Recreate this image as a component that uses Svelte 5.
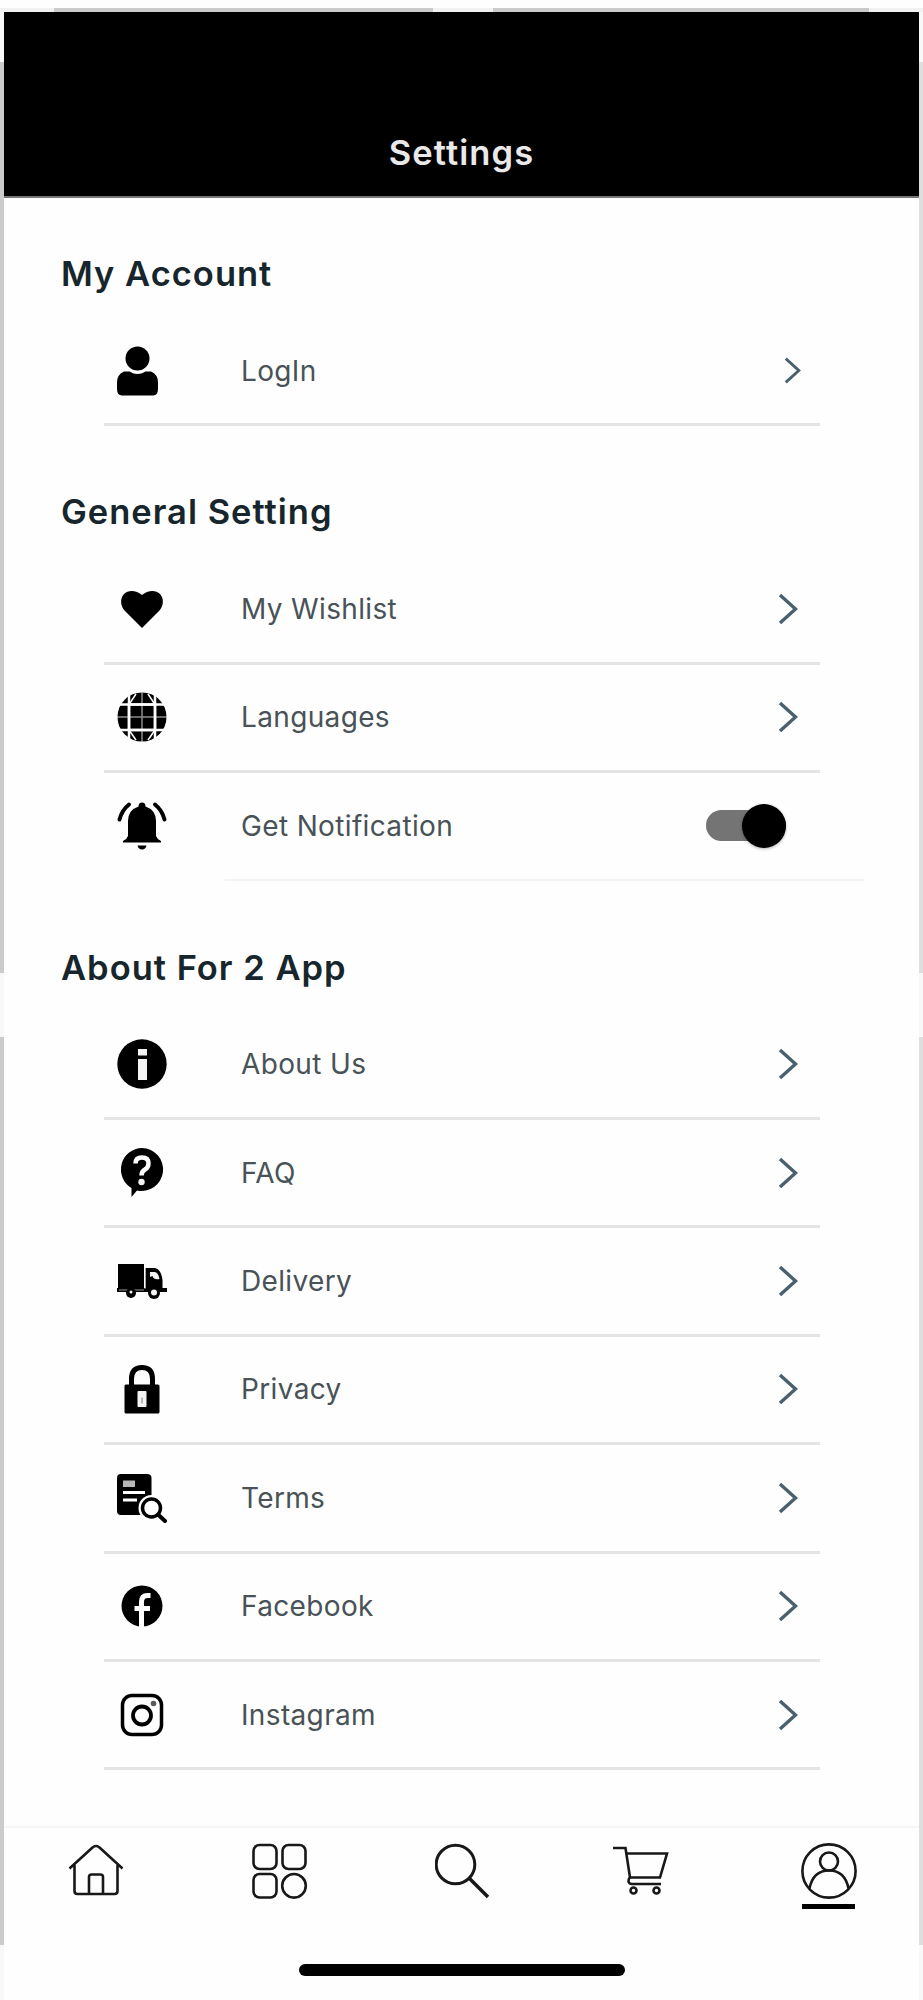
<script>
  const sections = [
    {
      title: 'My Account',
      rows: [{ icon: 'user', label: 'LogIn', control: 'small' }],
    },
    {
      title: 'General Setting',
      rows: [
        { icon: 'heart', label: 'My Wishlist' },
        { icon: 'globe', label: 'Languages' },
        { icon: 'bell', label: 'Get Notification', control: 'toggle' },
      ],
    },
    {
      title: 'About For 2 App',
      rows: [
        { icon: 'info', label: 'About Us' },
        { icon: 'faq', label: 'FAQ' },
        { icon: 'truck', label: 'Delivery' },
        { icon: 'lock', label: 'Privacy' },
        { icon: 'terms', label: 'Terms' },
        { icon: 'facebook', label: 'Facebook' },
        { icon: 'instagram', label: 'Instagram' },
      ],
    },
  ]

  const tabs = ['home', 'categories', 'search', 'cart', 'profile']

  let notify = $state(true)
  let active = $state('profile')
</script>

{#snippet rowIcon(name)}
  <svg class="row-icon" viewBox="0 0 50 50" aria-hidden="true">
    {#if name === 'user'}
      <circle cx="20.500" cy="12.500" r="12" />
      <path d="M7 25.500h5.500q8 5 16 0H34q7 3 7 11v6q0 7-5 7H5q-5 0-5-7v-6q0-8 7-11z" />
    {:else if name === 'heart'}
      <path d="M25 44 8 27C3 22 3 14 7 10s12-4 18 1c6-5 14-5 18-1s4 12-1 17z" />
    {:else if name === 'globe'}
      <circle cx="25" cy="25" r="24.500" />
      <g class="cut" stroke-width="2.500">
        <path d="M12 0v50M38 0v50M0 12.500h50M0 38h50" />
        <path d="M0 25h50M25 0v50" stroke-width="1.500" opacity=".55" />
        <rect x="12" y="12.500" width="26" height="25.500" />
        <path d="M19 2 12 12.500M31 2l7 10.500M19 48l-7-10M31 48l7-10" stroke-width="1.500" />
      </g>
    {:else if name === 'bell'}
      <path d="M25 1.500q3.500 0 3.500 4Q39 9 39 20v15q1 3 5 5v1.500H6V40q4-2 5-5V20Q11 9 21.500 5.500q0-4 3.500-4z" />
      <path d="M20.500 44.500h9q-1 4-4.500 4t-4.500-4z" />
      <path class="line" d="M12 3.500Q5 9 2.500 18.500M38 3.500q7 5.500 9.500 15" stroke-width="4" />
    {:else if name === 'info'}
      <circle cx="25" cy="25" r="24.700" />
      <rect class="light" x="21" y="10" width="9" height="6.500" />
      <rect class="light" x="21" y="20" width="9" height="21" />
    {:else if name === 'faq'}
      <path d="M25 0a21.500 21.500 0 1 1-5 42.500L14.500 49V40A21.500 21.500 0 0 1 25 0z" />
      <path class="cut" d="M18.500 15.500q0-6 6.500-6t6.500 6q0 4-3.500 6t-3.500 6" stroke-width="4.500" />
      <circle class="light" cx="24.500" cy="34" r="3.200" />
    {:else if name === 'truck'}
      <rect x="1" y="8" width="26" height="25" />
      <path d="M28.500 12H38q6 1 7.500 12v8H50v4H0v-4h28.500z" />
      <path class="light" d="M33 16h5q3.500 1 4.500 7-6 1-7-3l-2.500 1z" />
      <path class="cut" d="M28 9v24M2 34h25" stroke-width="1" opacity=".6" />
      <circle cx="14" cy="37" r="5" />
      <circle class="light" cx="14" cy="36" r="1.500" />
      <circle cx="37" cy="37" r="6" />
      <circle class="light" cx="37" cy="36.500" r="3" />
    {:else if name === 'lock'}
      <path class="line" d="M14.500 22v-7q0-11.500 10.500-11.500T35.500 15v7" stroke-width="5" />
      <rect x="7.500" y="20.500" width="35" height="29" rx="1.500" />
      <rect class="light" x="20.500" y="27" width="9" height="16" rx="1" />
      <path d="M25 34v5" class="line" stroke-width="1" opacity=".5" />
    {:else if name === 'terms'}
      <path d="M4 1h26q4.500 0 4.500 4v19Q22 25 24 37l2 5H4q-4 0-4-4V5q0-4 4-4z" />
      <rect x="6" y="7.500" width="12" height="6.500" class="light" opacity=".75" />
      <path class="cut" d="M6 19.500h22M6 27h14" stroke-width="3" />
      <circle class="white" cx="34.500" cy="35" r="13" />
      <circle class="line" cx="34.500" cy="35" r="9" stroke-width="3.500" />
      <path class="line" d="m41 41.500 7 6.500" stroke-width="4" />
    {:else if name === 'facebook'}
      <circle cx="25" cy="25" r="20.500" />
      <path class="cut" d="M33.500 14.500h-3q-6 0-6 6.500V47M17.500 27.500H33" stroke-width="5" />
    {:else if name === 'instagram'}
      <rect class="line" x="5.500" y="5.500" width="39" height="39" rx="9.500" stroke-width="3.500" />
      <circle class="line" cx="25" cy="25.500" r="9" stroke-width="3.800" />
      <circle cx="36.500" cy="13.500" r="2.800" opacity=".65" />
    {/if}
  </svg>
{/snippet}

{#snippet tabIcon(name)}
  <svg class="tab-icon" viewBox="0 0 56 56" aria-hidden="true">
    {#if name === 'home'}
      <path d="M1.500 25.500 24.500 4.500q3.500-3 7 0l23 21M6.500 22v26q0 3 3 3h37q3 0 3-3V22" />
      <path d="M21 51V34q0-2.500 2.500-2.500h9Q35 31.500 35 34v17" />
    {:else if name === 'categories'}
      <rect x="1.500" y="2" width="23" height="24" rx="6" />
      <rect x="30.500" y="2" width="23" height="24" rx="6" />
      <rect x="1.500" y="31" width="23" height="23.500" rx="6" />
      <circle cx="42" cy="42.800" r="11.800" />
    {:else if name === 'search'}
      <circle cx="20.500" cy="21.500" r="19.300" stroke-width="3" />
      <path d="m34 35 19 19" stroke-width="3.500" />
    {:else if name === 'cart'}
      <path d="M0 5h12.500l4.500 29.500h30L54 10.500H13.500" />
      <path d="M17 34.500q-1.500 1-1.500 3.500t3 3H48" />
      <circle cx="20.500" cy="47.500" r="3" />
      <circle cx="43.500" cy="47.500" r="3" />
    {:else if name === 'profile'}
      <circle cx="28" cy="28" r="26.600" />
      <circle cx="28" cy="18.500" r="9" />
      <path d="M8.500 45.500Q12 27.500 28 27.500t19.500 18" />
    {/if}
  </svg>
{/snippet}

<div class="screen">
  <div class="top-edge">
    <span></span>
    <span></span>
  </div>

  <div class="body">
    <div class="edge"><span></span><span></span></div>

    <div class="app">
      <header>
        <h1>Settings</h1>
      </header>

      <main>
        {#each sections as section}
          <section>
            <h2>{section.title}</h2>
            {#each section.rows as row}
              <div class="row" class:plain={row.control === 'toggle'}>
                <div class="icon-cell">{@render rowIcon(row.icon)}</div>
                <span class="label">{row.label}</span>
                {#if row.control === 'toggle'}
                  <button
                    class="toggle"
                    class:off={!notify}
                    aria-label={row.label}
                    onclick={() => (notify = !notify)}
                  >
                    <span class="knob"></span>
                  </button>
                {:else}
                  <svg class="chevron" class:small={row.control === 'small'} viewBox="0 0 20 32" aria-hidden="true">
                    <path d="m2 2 15.500 14L2 30" />
                  </svg>
                {/if}
              </div>
              {#if row.control === 'toggle'}
                <div class="thin-line"></div>
              {/if}
            {/each}
          </section>
        {/each}
      </main>

      <nav>
        {#each tabs as tab}
          <button class="tab" class:active={active === tab} aria-label={tab} onclick={() => (active = tab)}>
            {@render tabIcon(tab)}
          </button>
        {/each}
      </nav>
      <div class="home-bar"></div>
    </div>

    <div class="edge right"><span></span><span></span></div>
  </div>
</div>

<style>
  :global(body) {
    background: #fefefe;
  }

  .screen {
    width: 923px;
    height: 2000px;
    box-sizing: border-box;
    padding-top: 8px;
    overflow: hidden;
    font-family: Inter, "Liberation Sans", sans-serif;
  }

  .top-edge {
    display: grid;
    grid-template-columns: 379px 376px;
    gap: 60px;
    height: 4px;
    padding-left: 54px;
    background: #f1f1f1;
  }

  .top-edge span { background: #cbcbcb; }

  .body {
    display: grid;
    grid-template-columns: 4px 915px 4px;
    height: 1988px;
  }

  .edge {
    display: grid;
    grid-template-rows: 911px 908px;
    gap: 64px;
    padding-top: 50px;
    background: #f8f8f8;
  }

  .edge span { background: #cbcbcd; }

  .edge.right span { background: #dedede; }

  .app {
    display: flex;
    flex-direction: column;
  }

  header {
    display: flex;
    align-items: flex-end;
    justify-content: center;
    height: 186px;
    box-sizing: border-box;
    padding-bottom: 19px;
    background: #000;
    border-bottom: 2px solid #777;
  }

  h1 {
    margin: 0;
    color: #e9e9e9;
    font-size: 34.5px;
    font-weight: 600;
    line-height: 48px;
    letter-spacing: 1.1px;
  }

  main {
    display: flex;
    flex-direction: column;
    gap: 42px;
    height: 1628px;
    box-sizing: border-box;
    padding-top: 32px;
  }

  h2 {
    margin: 0 0 0 57px;
    color: #17262c;
    font-size: 34.5px;
    font-weight: 600;
    line-height: 88px;
    letter-spacing: 1px;
  }

  .row {
    display: grid;
    grid-template-columns: 137px 1fr auto;
    align-items: center;
    height: 108.4px;
    box-sizing: border-box;
    margin: 0 99px 0 100px;
    padding: 0 22px 0 0;
    border-bottom: 3px solid #e4e4e4;
  }

  .row.plain {
    height: 105.4px;
    padding-right: 34px;
    border-bottom: 0;
  }

  .thin-line {
    height: 2px;
    margin: 0 55px 1px 221px;
    background: #f4f4f4;
  }

  .icon-cell {
    display: flex;
    padding-left: 13px;
  }

  .row-icon {
    width: 50px;
    height: 50px;
    fill: #000;
  }

  .line {
    fill: none;
    stroke: #000;
    stroke-linecap: round;
  }

  .white { fill: #fefefe; }

  .cut {
    fill: none;
    stroke: #fefefe;
  }

  .light { fill: #f4f4f4; }

  .label {
    color: #485257;
    font-size: 28px;
    font-weight: 400;
    letter-spacing: 0.35px;
    white-space: nowrap;
  }

  .chevron {
    width: 20px;
    height: 32px;
    fill: none;
    stroke: #49616d;
    stroke-width: 3.4;
  }

  .chevron.small {
    width: 17px;
    height: 27px;
    margin-right: -3px;
  }

  .toggle {
    display: flex;
    align-items: center;
    justify-content: flex-end;
    width: 80px;
    height: 31px;
    padding: 0;
    border: 0;
    border-radius: 16px;
    background: #747474;
  }

  .toggle.off { justify-content: flex-start; }

  .knob {
    flex: none;
    width: 44px;
    height: 44px;
    border-radius: 50%;
    background: #000;
    box-shadow: 0 1px 3px rgba(0, 0, 0, 0.3);
  }

  nav {
    display: grid;
    grid-template-columns: 184px 183px 183px 173px 192px;
    height: 84px;
    border-top: 2px solid #f6f6f6;
    padding-top: 15px;
  }

  .tab {
    display: flex;
    flex-direction: column;
    align-items: center;
    gap: 5px;
    height: 67px;
    padding: 0;
    border: 0;
    background: none;
  }

  .tab:last-child { padding-left: 11px; }

  .tab.active::after {
    content: '';
    width: 53px;
    height: 5px;
    background: #000;
  }

  .tab-icon {
    width: 56px;
    height: 56px;
    fill: none;
    stroke: #181818;
    stroke-width: 2.6;
  }

  .home-bar {
    width: 326px;
    height: 12px;
    margin: 37px auto 0;
    border-radius: 6px;
    background: #000;
  }
</style>
